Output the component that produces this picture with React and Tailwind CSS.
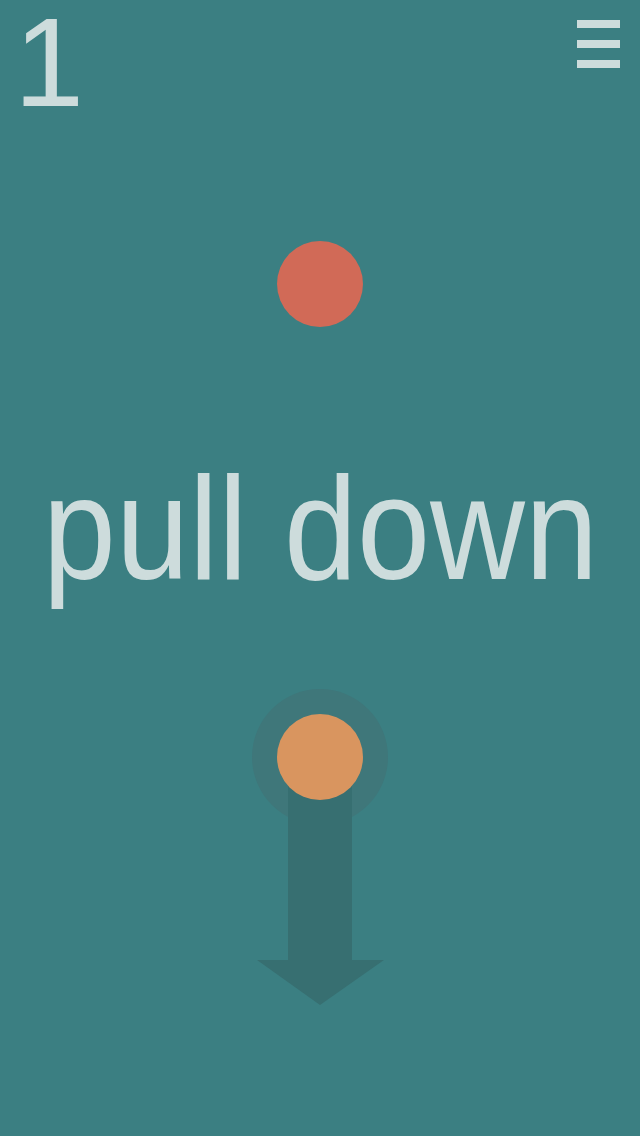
export default function App() {
  return (
    <div
      className="w-full h-[1136px] bg-[#3b7f82] flex flex-col overflow-hidden"
      style={{ fontFamily: '"Liberation Sans", Arial, sans-serif' }}
    >
      <header className="h-[126px] flex justify-between items-start">
        <span className="pl-[14px] pt-[4px] -mt-[10px] text-[126px] leading-[1.1] text-[#cddcdc]">1</span>
        <button className="mt-[20px] mr-[20px] flex flex-col gap-[12px]">
          <span className="block w-[43px] h-[8px] bg-[#cddcdc]" />
          <span className="block w-[43px] h-[8px] bg-[#cddcdc]" />
          <span className="block w-[43px] h-[8px] bg-[#cddcdc]" />
        </button>
      </header>

      <div className="flex flex-col items-center">
        <div className="mt-[115px] w-[86px] h-[86px] rounded-full bg-[#d16a57]" />

        {/* reference face is a bit narrower than Arial */}
        <p className="mt-[129px] text-[146px] leading-none scale-x-[0.9] text-[#cddcdc] whitespace-nowrap">
          pull down
        </p>

        <svg className="mt-[86px]" width="140" height="320" viewBox="0 0 140 320">
          <circle cx="70" cy="69" r="68" fill="#3f777a" />
          <rect x="38" y="69" width="64" height="204" fill="#376f71" />
          <polygon points="7,272 134,272 70,317" fill="#376f71" />
          <circle cx="70" cy="69" r="43" fill="#d9955f" />
        </svg>
      </div>
    </div>
  );
}
